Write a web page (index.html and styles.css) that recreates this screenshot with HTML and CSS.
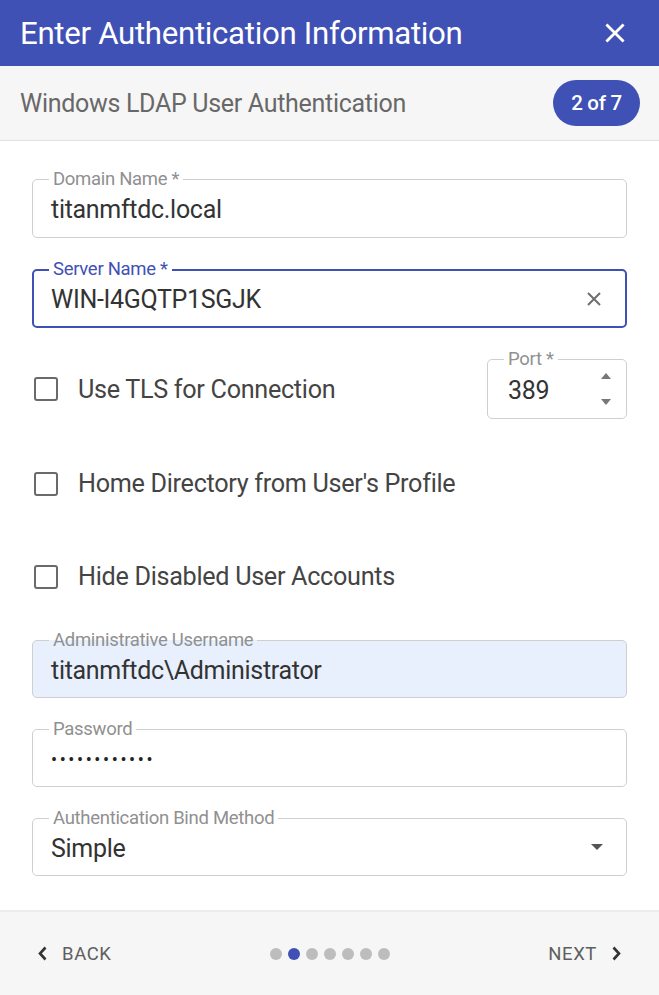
FILE: index.html
```html
<!DOCTYPE html>
<html lang="en">
<head>
<meta charset="utf-8">
<title>Enter Authentication Information</title>
<link rel="stylesheet" href="styles.css">
</head>
<body>
<div class="dialog">
  <header class="dlg-header">
    <h1 class="dlg-title">Enter Authentication Information</h1>
    <svg class="close-icon" viewBox="0 0 24 24" width="26" height="26"><path d="M5 5 L19 19 M19 5 L5 19" stroke="#fff" stroke-width="2.6" stroke-linecap="square" fill="none"/></svg>
  </header>
  <div class="dlg-sub">
    <span class="sub-title">Windows LDAP User Authentication</span>
    <span class="step-badge">2 of 7</span>
  </div>
  <main class="dlg-body">
    <div class="field">
      <span class="field-label">Domain Name *</span>
      <span class="field-value">titanmftdc.local</span>
    </div>
    <div class="field field-focused">
      <span class="field-label">Server Name *</span>
      <span class="field-value">WIN-I4GQTP1SGJK</span>
      <svg class="clear-icon" viewBox="0 0 16 16" width="16" height="16"><path d="M2 2 L14 14 M14 2 L2 14" stroke="#6e6e6e" stroke-width="2" fill="none"/></svg>
    </div>
    <div class="row-tls">
      <label class="check-row"><span class="checkbox"></span><span class="check-text">Use TLS for Connection</span></label>
      <div class="field field-port">
        <span class="field-label">Port *</span>
        <span class="field-value">389</span>
        <span class="spinner">
          <svg viewBox="0 0 10 6" width="10" height="6"><path d="M0 6 L5 0 L10 6 Z" fill="#777"/></svg>
          <svg viewBox="0 0 10 6" width="10" height="6"><path d="M0 0 L5 6 L10 0 Z" fill="#777"/></svg>
        </span>
      </div>
    </div>
    <label class="check-row check-home"><span class="checkbox"></span><span class="check-text">Home Directory from User's Profile</span></label>
    <label class="check-row check-hide"><span class="checkbox"></span><span class="check-text">Hide Disabled User Accounts</span></label>
    <div class="field field-filled field-admin">
      <span class="field-label">Administrative Username</span>
      <span class="field-value">titanmftdc\Administrator</span>
    </div>
    <div class="field field-pass">
      <span class="field-label">Password</span>
      <span class="field-value pass-dots">••••••••••••</span>
    </div>
    <div class="field field-select">
      <span class="field-label">Authentication Bind Method</span>
      <span class="field-value">Simple</span>
      <svg class="select-arrow" viewBox="0 0 12 6" width="12" height="6"><path d="M0 0 L6 6 L12 0 Z" fill="#555"/></svg>
    </div>
  </main>
  <footer class="dlg-footer">
    <span class="nav-btn nav-back">
      <svg viewBox="0 0 9 15" width="9" height="15"><path d="M7.5 1.5 L2 7.5 L7.5 13.5" stroke="#333" stroke-width="2.6" fill="none"/></svg>
      BACK
    </span>
    <span class="dots">
      <span class="dot"></span><span class="dot dot-active"></span><span class="dot"></span><span class="dot"></span><span class="dot"></span><span class="dot"></span><span class="dot"></span>
    </span>
    <span class="nav-btn nav-next">
      NEXT
      <svg viewBox="0 0 9 15" width="9" height="15"><path d="M1.5 1.5 L7 7.5 L1.5 13.5" stroke="#333" stroke-width="2.6" fill="none"/></svg>
    </span>
  </footer>
</div>
</body>
</html>
```

FILE: styles.css
```css
* { box-sizing: border-box; }
html, body { margin: 0; padding: 0; }
body {
  width: 659px;
  height: 995px;
  font-family: Roboto, "Liberation Sans", Arial, sans-serif;
  background: #fff;
  overflow: hidden;
}
.dialog {
  display: flex;
  flex-direction: column;
  height: 995px;
}
.dlg-header {
  height: 66px;
  background: #3f51b5;
  display: flex;
  align-items: center;
  justify-content: space-between;
  padding: 0 31px 0 20px;
  flex: none;
}
.dlg-title {
  margin: 0;
  color: #fff;
  font-size: 31.2px;
  font-weight: 400;
  letter-spacing: -0.3px;
}
.close-icon { display: block; }
.dlg-sub {
  height: 75px;
  background: #f6f6f6;
  border-bottom: 1px solid #e2e2e2;
  display: flex;
  align-items: center;
  justify-content: space-between;
  padding: 0 19px 0 20px;
  flex: none;
}
.sub-title {
  color: #686868;
  font-size: 25px;
  letter-spacing: -0.3px;
}
.step-badge {
  width: 87px;
  height: 46px;
  border-radius: 23px;
  background: #3f51b5;
  color: #fff;
  font-size: 20.5px;
  font-weight: 500;
  letter-spacing: -0.3px;
  display: flex;
  align-items: center;
  justify-content: center;
}
.dlg-body {
  flex: 1;
  padding: 38px 32px 0 32px;
  display: flex;
  flex-direction: column;
}
.field {
  position: relative;
  height: 59px;
  border: 1px solid #cfcfcf;
  border-radius: 5px;
  display: flex;
  align-items: center;
  padding: 0 18px;
  flex: none;
}
.field-label {
  position: absolute;
  left: 16px;
  top: -11px;
  padding: 0 4px;
  font-size: 18.5px;
  line-height: 20px;
  color: #909090;
  background: #fff;
  letter-spacing: -0.3px;
}
.field-value {
  font-size: 25px;
  color: #333;
  letter-spacing: -0.3px;
  padding-top: 2px;
}
.field + .field { margin-top: 31px; }
.field-focused {
  border: 2px solid #3f51b5;
  padding: 0 17px;
  justify-content: space-between;
}
.field-focused .field-label { color: #3f51b5; left: 15px; top: -12px; }
.clear-icon { margin-right: 6px; }
.row-tls {
  margin-top: 31px;
  display: flex;
  align-items: center;
  justify-content: space-between;
}
.field-port {
  width: 140px;
  height: 60px;
  justify-content: space-between;
  padding: 0 18px 0 20px;
}
.field-port .field-label { left: 16px; }
.spinner {
  display: flex;
  flex-direction: column;
  gap: 20px;
  margin-right: -3px;
}
.spinner svg { display: block; }
.check-row {
  display: flex;
  align-items: center;
  gap: 20px;
  padding-left: 2px;
}
.checkbox {
  width: 24px;
  height: 24px;
  border: 2px solid #6a6a6a;
  border-radius: 3px;
  flex: none;
}
.check-text {
  font-size: 25.2px;
  color: #444;
  letter-spacing: -0.3px;
}
.check-home { margin-top: 50px; }
.check-hide { margin-top: 64px; }
.field-admin { margin-top: 49px; height: 58px; }
.field-filled {
  background: #e8f0fe;
}
.field-filled .field-label {
  background: linear-gradient(#fff 50%, #e8f0fe 50%);
}
.field-pass { height: 58px; }
.field-select { height: 58px; justify-content: space-between; }
.pass-dots {
  font-size: 18px;
  letter-spacing: 2.6px;
  color: #222;
}
.select-arrow { margin-right: 5px; }
.dlg-footer {
  height: 85px;
  background: #f6f6f6;
  border-top: 2px solid #ececec;
  display: flex;
  align-items: center;
  justify-content: space-between;
  padding: 0 38px 0 38px;
  flex: none;
  position: relative;
}
.nav-btn {
  display: flex;
  align-items: center;
  gap: 15px;
  font-size: 18.5px;
  font-weight: 400;
  color: #5e5e5e;
  letter-spacing: 0.6px;
}
.nav-next { gap: 15px; }
.nav-btn svg { display: block; }
.dots {
  display: flex;
  gap: 6px;
  margin-left: 0;
}
.dot {
  width: 12px;
  height: 12px;
  border-radius: 50%;
  background: #bdbdbd;
}
.dot-active { background: #3f51b5; }
```
